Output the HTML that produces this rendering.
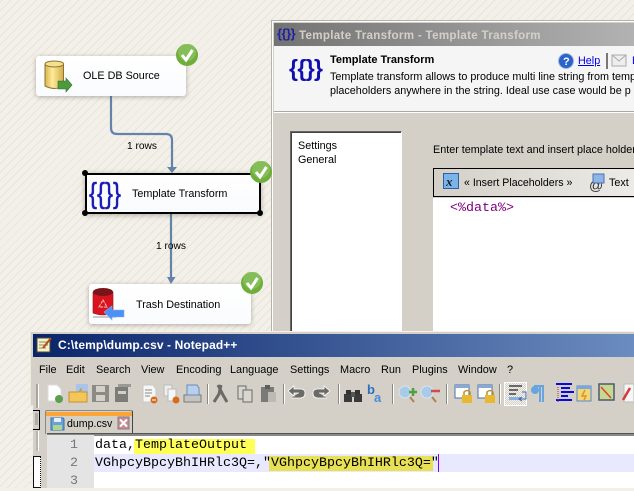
<!DOCTYPE html>
<html><head><meta charset="utf-8"><style>
html,body{margin:0;padding:0}
body{width:634px;height:488px;overflow:hidden;position:relative;font-family:"Liberation Sans",sans-serif;font-size:11px;color:#000;background:#f3f0e9}
div,span,svg{position:absolute}
span{white-space:nowrap}
#bg{left:0;top:0;width:634px;height:488px;background:repeating-linear-gradient(-45deg,#f3f0e9 0,#f3f0e9 5px,#e8e4d9 5px,#e8e4d9 6px)}
.node{background:linear-gradient(#fff,#fafbfe);border-radius:3px;box-shadow:0 1px 5px rgba(90,85,70,.45)}
.chk{width:22px;height:22px}
.m{top:364px;font-size:10.9px;line-height:13px}
.code{font-family:"Liberation Mono",monospace;font-size:13.33px;line-height:18px;white-space:pre}
.sep{top:384px;width:1px;height:20px;background:#8a8880;box-shadow:1px 0 0 #fff}
</style></head><body>
<div id="bg"></div>

<svg style="left:0;top:0" width="280" height="330">
<path d="M111 96V128Q111 134 117 134H166Q172 134 172 140V168" fill="none" stroke="#6483ab" stroke-width="2.2"/>
<path d="M167 167H177L172 173Z" fill="#6483ab"/>
<path d="M171 213V280" fill="none" stroke="#6483ab" stroke-width="2.2"/>
<path d="M167 277H175.500L171 284Z" fill="#6483ab"/>
</svg>
<span style="left:127px;top:141px;font-size:10.2px">1 rows</span>
<span style="left:156px;top:241px;font-size:10.2px">1 rows</span>

<div class="node" style="left:36px;top:56px;width:150px;height:40px"></div>
<svg style="left:42px;top:58px" width="34" height="36">
<defs><linearGradient id="y" x1="0" x2="1"><stop offset="0" stop-color="#d9b64a"/><stop offset=".4" stop-color="#fdeb9c"/><stop offset="1" stop-color="#d3ad45"/></linearGradient></defs>
<path d="M3 6V28Q13 33 21.500 28V6Z" fill="url(#y)" stroke="#8d7334"/><ellipse cx="12.300" cy="6" rx="9.300" ry="3" fill="#f6e08a" stroke="#8d7334"/>
<path d="M16 23H24V20L30 27L24 34V31H16Z" fill="#4c9a3c" stroke="#2f6e29" stroke-width=".6"/>
</svg>
<span style="left:83px;top:70px;font-size:10.8px">OLE DB Source</span>

<div class="node" style="left:85px;top:173px;width:172px;height:37px;border:2px solid #000;border-radius:0;background:linear-gradient(#fff,#fafbfe)"></div>
<svg style="left:80px;top:168px" width="190" height="50">
<circle cx="5" cy="5" r="3" fill="#000"/><circle cx="5" cy="45" r="3" fill="#000"/><circle cx="180" cy="45" r="3" fill="#000"/>
<text x="9" y="35" font-family="Liberation Sans" font-size="29" fill="#1a1ab8" stroke="#1a1ab8" stroke-width=".5" textLength="32" lengthAdjust="spacingAndGlyphs">{{}}</text>
</svg>
<span style="left:132px;top:188px;font-size:10.8px">Template Transform</span>

<div class="node" style="left:89px;top:284px;width:162px;height:40px"></div>
<svg style="left:92px;top:286px" width="36" height="36">
<path d="M1 6V27Q11 31 21 27V6Z" fill="#d9141e" stroke="#8e0e12" stroke-width=".6"/><ellipse cx="11" cy="6" rx="10" ry="4" fill="#7a1418"/>
<path d="M7 21L11 14L15 21Z" fill="none" stroke="#f7c5c5" stroke-width="1" stroke-dasharray="3 1"/>
<path d="M1 31H24" stroke="#b8b8b8" stroke-width="1.500"/>
<path d="M12 26L20 20V24H32V31H20V34Z" fill="#4c8ff5" stroke="#82b2f8" stroke-width=".6"/>
</svg>
<span style="left:136px;top:299px;font-size:10.8px">Trash Destination</span>

<!-- dialog -->
<div style="left:271px;top:20px;width:363px;height:320px;background:#d4d0c8;border-left:1px solid #b5b2aa;border-top:1px solid #b5b2aa;box-shadow:inset 1px 1px 0 #fff"></div>
<div style="left:274px;top:23px;width:360px;height:23px;background:linear-gradient(90deg,#737373,#b2b2b2)"></div>
<span style="left:277px;top:26px;font-size:13px;font-weight:bold;color:#2020a0;letter-spacing:-.5px">{{}}</span>
<span style="left:299px;top:29px;font-size:11.600px;font-weight:bold;color:#d4d0c8;letter-spacing:.3px">Template Transform - Template Transform</span>
<div style="left:274px;top:46px;width:360px;height:65px;background:#f5f5f5;border-bottom:1px solid #a8a8a4;box-shadow:0 1px 0 #fff"></div>
<span style="left:289px;top:53px;font-size:23px;font-weight:bold;color:#1010b0;letter-spacing:-.6px;line-height:30px">{{}}</span>
<span style="left:330px;top:54px;font-size:11px;font-weight:bold">Template Transform</span>
<svg style="left:558px;top:53px" width="76" height="18">
<circle cx="8" cy="8" r="7.500" fill="#2c63c8" stroke="#9db8e0"/><text x="5" y="12" font-size="11" font-weight="bold" fill="#fff" font-family="Liberation Sans">?</text>
<rect x="48" y="0" width="2" height="16" fill="#777"/>
<rect x="54" y="2" width="14" height="11" fill="#eee" stroke="#aaa"/><path d="M54 2L61 8L68 2" fill="none" stroke="#aaa"/>
</svg>
<span style="left:578px;top:55px;font-size:10.8px;color:#00e;text-decoration:underline">Help</span>
<span style="left:632px;top:55px;font-size:11px;color:#00e">E</span>
<span style="left:330px;top:71px;font-size:10.8px">Template transform allows to produce multi line string from temp</span>
<span style="left:330px;top:85px;font-size:10.8px">placeholders anywhere in the string. Ideal use case would be p</span>

<div style="left:290px;top:131px;width:110px;height:205px;background:#fff;border:1px solid #fff;border-top:1px solid #666;border-left:1px solid #666;box-shadow:inset 1px 1px 0 #444"></div>
<span style="left:298px;top:140px;font-size:10.8px">Settings</span>
<span style="left:298px;top:154px;font-size:10.8px">General</span>
<span style="left:433px;top:144px;font-size:10.8px">Enter template text and insert place holder</span>
<div style="left:433px;top:168px;width:201px;height:27px;border:1px solid #000;border-right:none;background:linear-gradient(90deg,#d4d0c8,#ecebe7)"></div>
<div style="left:433px;top:198px;width:201px;height:140px;background:#fff"></div>
<svg style="left:443px;top:173px" width="180" height="20">
<rect x=".5" y=".5" width="15" height="15" fill="#7ab4e8" stroke="#2c5fa8"/>
<text x="3" y="13" font-size="13" font-weight="bold" font-style="italic" font-family="Liberation Serif" fill="#123">x</text>
<text x="146" y="17" font-size="14" font-family="Liberation Sans" fill="#333">@</text>
<rect x="150" y="1" width="11" height="9" fill="#8fb4e6" stroke="#4a72b0"/>
</svg>
<span style="left:464px;top:177px;font-size:10.6px">« Insert Placeholders »</span>
<span style="left:609px;top:177px;font-size:10.8px">Text</span>
<span class="code" style="left:450px;top:200px;color:#800080">&lt;%data%&gt;</span>

<!-- notepad -->
<div style="left:30px;top:331px;width:604px;height:157px;background:#d4d0c8;border-left:1px solid #ece9d8;border-top:1px solid #f4f2ea;box-sizing:border-box"></div>
<div style="left:33px;top:334px;width:601px;height:23px;background:linear-gradient(90deg,#0a246a,#6b8cc0)"></div>
<svg style="left:36px;top:336px" width="18" height="18">
<rect x="1" y="2" width="13" height="14" fill="#f6f1c9" stroke="#4a4a30"/><path d="M3 6H12M3 9H12M3 12H10" stroke="#8a8a60"/><path d="M7 12L15 2" stroke="#b84a20" stroke-width="2"/>
</svg>
<span style="left:58px;top:338px;font-size:12px;font-weight:bold;color:#fff;letter-spacing:.1px">C:\temp\dump.csv - Notepad++</span>
<span class="m" style="left:39px">File</span><span class="m" style="left:66px">Edit</span><span class="m" style="left:96px">Search</span><span class="m" style="left:141px">View</span><span class="m" style="left:176px">Encoding</span><span class="m" style="left:230px">Language</span><span class="m" style="left:290px">Settings</span><span class="m" style="left:340px">Macro</span><span class="m" style="left:381px">Run</span><span class="m" style="left:412px">Plugins</span><span class="m" style="left:458px">Window</span><span class="m" style="left:507px">?</span>

<div style="left:36px;top:384px;width:2px;height:24px;background:#a8a59e;box-shadow:1px 0 0 #fff"></div>
<div class="sep" style="left:207px"></div><div class="sep" style="left:283px"></div><div class="sep" style="left:338px"></div><div class="sep" style="left:392px"></div><div class="sep" style="left:446px"></div><div class="sep" style="left:499px"></div>
<div style="left:504px;top:382px;width:21px;height:22px;border:1px solid #fff;background:repeating-conic-gradient(#d4d0c8 0 25%,#f4f2ee 0 50%) 0 0/2px 2px"></div>
<svg style="left:46px;top:382px" width="588" height="24">
<path d="M2 3H11L15 7V19H2Z" fill="#fff" stroke="#ddd"/><circle cx="13" cy="17" r="4" fill="#5aa050"/>
<rect x="30" y="2" width="12" height="12" fill="#a9c4e8"/><path d="M23 10H33L35 7V10H41V20H23Z" fill="#f3c65a" stroke="#c89030"/>
<path d="M46 3H63V20H46Z" fill="#8a8a86"/><rect x="50" y="4" width="9" height="6" fill="#d4d0c8"/><rect x="50" y="13" width="9" height="6" fill="#d4d0c8"/>
<path d="M69 5H82V20H69Z" fill="#7c7c78"/><rect x="72" y="9" width="8" height="3" fill="#d4d0c8"/><rect x="72" y="2" width="13" height="3" fill="#9a9a96"/>
<path d="M97 3H107L110 7V20H97Z" fill="#f6f6f6" stroke="#c8c8c4"/><path d="M99 8H106M99 11H106M99 14H104" stroke="#888"/><circle cx="108" cy="18" r="3.500" fill="#d86a20"/><rect x="106" y="17.500" width="4" height="1" fill="#fff"/>
<path d="M118 3H126V14H118Z" fill="#eee" stroke="#bbb"/><path d="M122 7H130V19H122Z" fill="#f6f6f6" stroke="#bbb"/><circle cx="130" cy="18" r="3.500" fill="#d86a20"/>
<path d="M138 13H155V20H138Z" fill="#c4c4c0" stroke="#7a7a78"/><path d="M141 3H151L153 6V13H141Z" fill="#b8d0ee" stroke="#6a8ab8"/>
<path d="M175 3L173 12L168 20M172 3L177 13L181 20" fill="none" stroke="#6a6a66" stroke-width="3"/>
<path d="M192 4H200V17H192Z" fill="#d8d6d0" stroke="#6a6a66"/><path d="M197 8H206V20H197Z" fill="#d8d6d0" stroke="#6a6a66"/>
<path d="M215 5H228V20H215Z" fill="#7a7a76"/><rect x="219" y="3" width="5" height="4" fill="#5e5e5a"/><rect x="222" y="10" width="8" height="10" fill="#bcbab4"/>
<path d="M245 16H254Q259 16 259 11Q259 7 254 7H248V4L242 9L248 14V11H253" fill="#6a6a66" stroke="#fff" stroke-width=".8"/>
<path d="M281 16H272Q267 16 267 11Q267 7 272 7H278V4L284 9L278 14V11H273" fill="#6a6a66" stroke="#fff" stroke-width=".8"/>
<rect x="300" y="8" width="5" height="4" fill="#333"/><rect x="309" y="8" width="5" height="4" fill="#333"/><rect x="298" y="12" width="8" height="8" fill="#3a3a3a"/><rect x="308" y="12" width="8" height="8" fill="#3a3a3a"/><rect x="305" y="10" width="4" height="5" fill="#555"/>
<text x="321" y="12" font-size="13" font-weight="bold" fill="#2a70c0" font-family="Liberation Sans">b</text><text x="328" y="20" font-size="13" font-weight="bold" fill="#4a8ad8" font-family="Liberation Sans">a</text>
<circle cx="359" cy="10" r="6" fill="#a8cce8" stroke="#d8e4f0"/><path d="M363 10H371M367 6V14" stroke="#4ea040" stroke-width="2.500"/><path d="M364 15L368 20" stroke="#b08050" stroke-width="2"/>
<circle cx="381" cy="10" r="6" fill="#a8cce8" stroke="#d8e4f0"/><path d="M385 9H394" stroke="#d84848" stroke-width="2.500"/><path d="M386 15L390 20" stroke="#b08050" stroke-width="2"/>
<rect x="409" y="3" width="14" height="13" fill="#fff" stroke="#4a72a8"/><rect x="409" y="3" width="14" height="3" fill="#88a8d8"/><rect x="416" y="13" width="10" height="8" fill="#e8b830"/><path d="M418 13V10Q421 7 424 10V13" fill="none" stroke="#b89030" stroke-width="1.500"/>
<rect x="432" y="3" width="14" height="13" fill="#fff" stroke="#4a72a8"/><rect x="432" y="3" width="14" height="3" fill="#88a8d8"/><rect x="439" y="13" width="10" height="8" fill="#e8b830"/><path d="M441 13V10Q444 7 447 10V13" fill="none" stroke="#b89030" stroke-width="1.500"/>
<path d="M463 4H476M463 8H472M463 12H470" stroke="#222" stroke-width="1.200"/><rect x="463" y="15" width="12" height="3" fill="#8ab0e0"/><path d="M476 10H480V17H474M476 15L473 17L476 19" fill="none" stroke="#3a68a8"/>
<path d="M488 4H497V20M494 4V20" fill="none" stroke="#68a4e0" stroke-width="2"/><circle cx="489" cy="8" r="4" fill="#68a4e0"/>
<path d="M510 2H526M515 6H524M515 10H528M515 14H522M510 18H526" stroke="#0a0ae0" stroke-width="2"/><path d="M512 5V20" stroke="#a04040" stroke-dasharray="1 1"/>
<rect x="531" y="4" width="14" height="15" fill="#f0d878" stroke="#5a88c8"/><rect x="531" y="4" width="14" height="3" fill="#78a8e0"/><path d="M539 8L536 14H540L538 18" stroke="#e89020" fill="none" stroke-width="1.500"/>
<rect x="553" y="2" width="15" height="16" fill="#c8d890" stroke="#4a5a70" stroke-width="1.500"/><path d="M555 5L565 16" stroke="#d84828" stroke-width="1.500"/>
<rect x="578" y="2" width="10" height="18" fill="#f6f6f6" stroke="#bbb"/><path d="M577 18L584 6" stroke="#d83838" stroke-width="2.500"/>
</svg>

<!-- left strip -->
<div style="left:33px;top:410px;width:6px;height:18px;border:1px solid #000;border-left:none;background:#d4d0c8"></div>
<div style="left:35px;top:413px;width:3px;height:12px;background:#b0ada6"></div>
<div style="left:36px;top:431px;width:2px;height:20px;background:#b8b5ae;box-shadow:1px 0 0 #fff"></div>
<div style="left:33px;top:456px;width:8px;height:32px;background:#fff;border:1px solid #111;border-right:1px dotted #111;box-sizing:border-box"></div>
<div style="left:30px;top:405px;width:3px;height:83px;background:repeating-linear-gradient(-45deg,#f3f0e9 0,#f3f0e9 5px,#e8e4d9 5px,#e8e4d9 6px)"></div>

<!-- tab -->
<div style="left:45px;top:410px;width:88px;height:24px;background:#d4d0c8;border:1px solid #888;border-bottom:none;border-right:1px solid #444;border-top-left-radius:2px;border-top-right-radius:2px;box-sizing:border-box"></div>
<div style="left:46px;top:412px;width:86px;height:4px;background:#faa535"></div>
<svg style="left:50px;top:416px" width="84" height="16">
<path d="M1 2H13L14 3V14H1Z" fill="#6a9fd8" stroke="#3c6ea8"/><rect x="3" y="9" width="9" height="5" fill="#a8d890"/><rect x="4" y="2" width="7" height="4" fill="#e4eef8"/>
<rect x="68" y="1" width="11" height="12" fill="#c98a94" stroke="#8a7a80"/><path d="M70 3.500L77 10.500M77 3.500L70 10.500" stroke="#fff" stroke-width="2"/>
</svg>
<span style="left:67px;top:418px;font-size:10.6px">dump.csv</span>

<!-- editor -->
<div style="left:47px;top:433px;width:587px;height:55px;background:#fff;border-top:1px solid #555;box-shadow:inset 0 2px 0 #888;box-sizing:border-box"></div>
<div style="left:47px;top:435px;width:47px;height:53px;background:#e4e4e4"></div>
<div style="left:94px;top:454px;width:540px;height:18px;background:#e8e8ff"></div>
<div style="left:134px;top:439px;width:121px;height:15px;background:#ffff55"></div>
<div style="left:269px;top:456px;width:164px;height:15px;background:#e8e055"></div>
<div style="left:438px;top:454px;width:1px;height:18px;background:#8000ff"></div>
<span class="code" style="left:70px;top:437px;color:#777">1</span>
<span class="code" style="left:70px;top:455px;color:#777">2</span>
<span class="code" style="left:70px;top:473px;color:#777">3</span>
<span class="code" style="left:95px;top:437px">data,TemplateOutput</span>
<span class="code" style="left:95px;top:455px">VGhpcyBpcyBhIHRlc3Q=,"VGhpcyBpcyBhIHRlc3Q="</span>

<!-- check marks -->
<svg class="chk" style="left:176px;top:44px" viewBox="0 0 22 22"><circle cx="11" cy="11" r="11" fill="#6fae3a"/><circle cx="11" cy="8" r="9" fill="#9ccc78" opacity=".5"/><path d="M6 11L10 16L16.500 6" fill="none" stroke="#fff" stroke-width="3"/></svg>
<svg class="chk" style="left:250px;top:161px" viewBox="0 0 22 22"><circle cx="11" cy="11" r="11" fill="#6fae3a"/><circle cx="11" cy="8" r="9" fill="#9ccc78" opacity=".5"/><path d="M6 11L10 16L16.500 6" fill="none" stroke="#fff" stroke-width="3"/></svg>
<svg class="chk" style="left:241px;top:272px" viewBox="0 0 22 22"><circle cx="11" cy="11" r="11" fill="#6fae3a"/><circle cx="11" cy="8" r="9" fill="#9ccc78" opacity=".5"/><path d="M6 11L10 16L16.500 6" fill="none" stroke="#fff" stroke-width="3"/></svg>
</body></html>
